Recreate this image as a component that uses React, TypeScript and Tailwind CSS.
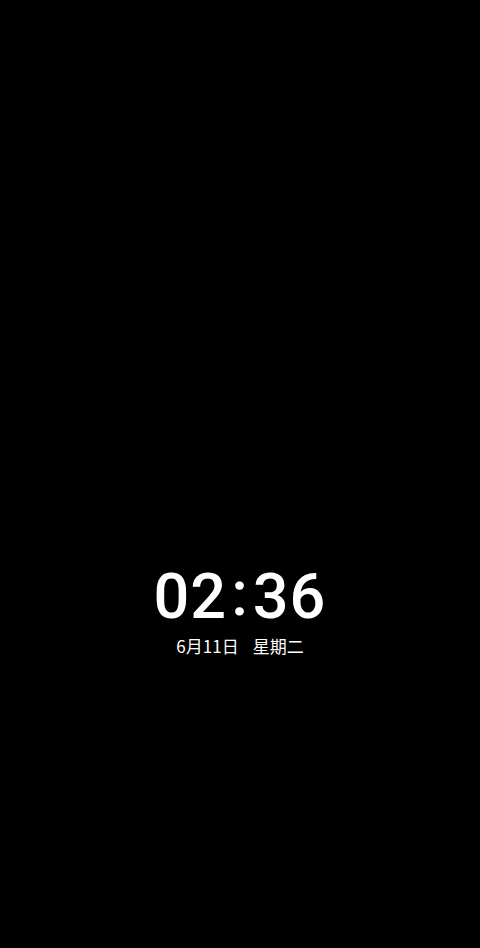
export default function App() {
  return (
    <div className="w-[480px] h-[948px] bg-black flex flex-col items-center text-white">
      <div className="h-[561px] shrink-0" />
      <div className="flex items-center text-[63px] leading-[72px] font-medium font-['Roboto',sans-serif] tracking-[1px]">
        <span>02</span>
        <span className="mx-[4px] -mt-[6px]">:</span>
        <span>36</span>
      </div>
      <div className="mt-[3px] flex gap-[14px] text-[17px] leading-[20px] font-['Noto_Sans_CJK_SC',sans-serif]">
        <span>6月11日</span>
        <span>星期二</span>
      </div>
    </div>
  );
}
